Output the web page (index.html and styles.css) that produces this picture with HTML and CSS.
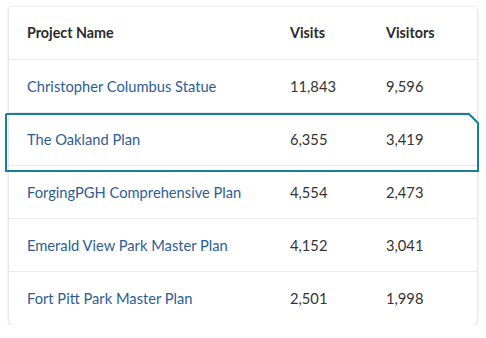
FILE: index.html
```html
<!DOCTYPE html>
<html>
<head>
<meta charset="utf-8">
<link rel="stylesheet" href="styles.css">
</head>
<body>
<div class="card">
  <div class="row head">
    <div class="name">Project Name</div>
    <div class="num">Visits</div>
    <div class="num">Visitors</div>
  </div>
  <div class="row">
    <div class="name link">Christopher Columbus Statue</div>
    <div class="num">11,843</div>
    <div class="num">9,596</div>
  </div>
  <div class="row selected">
    <div class="name link">The Oakland Plan</div>
    <div class="num">6,355</div>
    <div class="num">3,419</div>
    <svg class="focus" width="477" height="59" viewBox="0 0 477 59">
      <polyline points="1,1 464,1 473,10 473,58 1,58 1,1" fill="none" stroke="#17809f" stroke-width="2"/>
    </svg>
  </div>
  <div class="row">
    <div class="name link">ForgingPGH Comprehensive Plan</div>
    <div class="num">4,554</div>
    <div class="num">2,473</div>
  </div>
  <div class="row">
    <div class="name link">Emerald View Park Master Plan</div>
    <div class="num">4,152</div>
    <div class="num">3,041</div>
  </div>
  <div class="row last">
    <div class="name link">Fort Pitt Park Master Plan</div>
    <div class="num">2,501</div>
    <div class="num">1,998</div>
  </div>
</div>
</body>
</html>
```
FILE: styles.css
```css
html, body {
  margin: 0;
  padding: 0;
  background: #ffffff;
}
body {
  font-family: Lato, "Open Sans", sans-serif;
  font-size: 14.7px;
  color: #333333;
}
.card {
  margin: 7px 0 0 9px;
  width: 468px;
  background: #ffffff;
  border-radius: 0 0 5px 5px;
  box-shadow: 0 0 3px rgba(0, 0, 0, 0.14), 0 1px 3px rgba(0, 0, 0, 0.12);
}
.row {
  position: relative;
  display: grid;
  grid-template-columns: 263px 96px 1fr;
  align-items: center;
  height: 53px;
  box-sizing: border-box;
  padding-left: 18px;
  padding-bottom: 1px;
  border-bottom: 1px solid #ebebeb;
}
.row.last {
  border-bottom: none;
}
.head {
  font-weight: 700;
  font-size: 14.3px;
  color: #2b2b2b;
}
.link {
  color: #2e5d95;
}
.focus {
  position: absolute;
  left: -4px;
  top: 0px;
}
```
